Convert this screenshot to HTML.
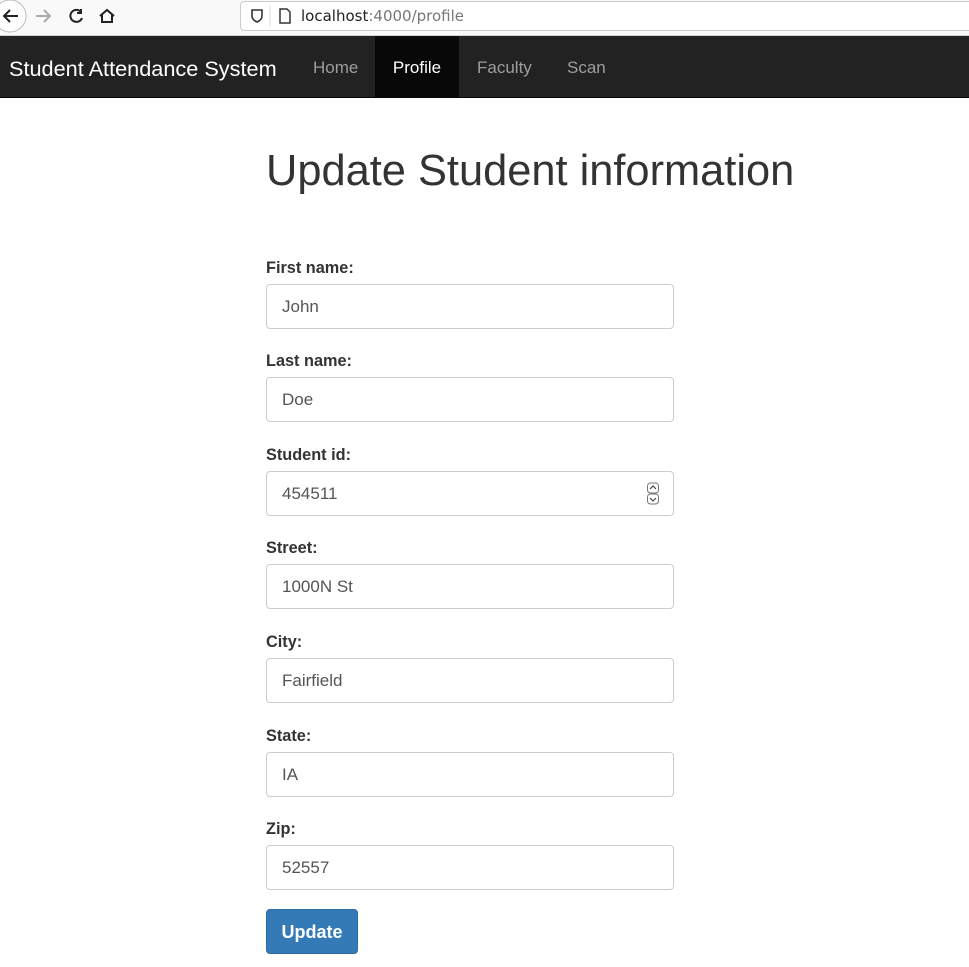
<!DOCTYPE html>
<html><head><style>
body{margin:0;width:969px;height:967px;overflow:hidden;background:#fff;font-family:"Liberation Sans",sans-serif;color:#333}
.chrome{position:absolute;left:0;top:0;width:969px;height:35px;background:#f9f9fa;border-bottom:1px solid #d0d0d0}
.url{position:absolute;left:240px;top:1px;width:740px;height:28px;border:1px solid #ccc;border-radius:4px;background:#fff}
.url span{position:absolute;left:60px;top:5px;font-size:15px;font-family:"DejaVu Sans",sans-serif;color:#222}
.nav{position:absolute;left:0;top:36px;width:969px;height:61px;background:#222;border-bottom:1px solid #080808}
.brand{position:absolute;left:9px;top:20px;font-size:21.7px;color:#fff}
.ni{position:absolute;top:1px;height:61px;line-height:61px;font-size:17px;color:#9d9d9d}
h1{position:absolute;left:266px;top:147px;margin:0;font-weight:normal;font-size:43.4px;color:#333}
label{position:absolute;left:266px;font-weight:bold;font-size:16.3px;color:#333}
.in{position:absolute;left:266px;width:406px;height:43px;border:1px solid #ccc;border-radius:4px;font-size:17px;color:#555;line-height:44px;text-indent:15px}
.btn{position:absolute;left:266px;top:909px;width:90px;height:43px;background:#337ab7;border:1px solid #2e6da4;border-radius:4px;color:#fff;font-weight:bold;font-size:18px;line-height:45px;text-align:center}
</style></head><body>
<div class="chrome">
<svg width="240" height="35" style="position:absolute;left:0;top:0">
<circle cx="10" cy="16" r="16" fill="#fff" stroke="#bbb"/>
<path d="M18 16H4M10 10l-6 6 6 6" stroke="#222" stroke-width="2" fill="none"/>
<path d="M50 16H36M44 10l6 6-6 6" stroke="#aaa" stroke-width="2" fill="none"/>
<path d="M81 12a6 6 0 1 0 1 6M81 9v4h-4" stroke="#222" stroke-width="2" fill="none"/>
<path d="M100 16l7-6 7 6M102 14v8h10v-8" stroke="#222" stroke-width="2" fill="none"/>
</svg>
<div class="url"><svg width="60" height="28" style="position:absolute;left:0;top:0"><path d="M11 8h10v6c0 4-5 6-5 6s-5-2-5-6z" stroke="#333" stroke-width="1.6" fill="none"/><line x1="29" y1="4" x2="29" y2="24" stroke="#ddd"/><path d="M39 7h7l3 3v11h-10z" stroke="#333" stroke-width="1.5" fill="none"/></svg><span>localhost<span style="position:static;color:#777">:4000/profile</span></span></div>
</div>
<div class="nav"><div class="brand">Student Attendance System</div>
<div class="ni" style="left:313px">Home</div>
<div class="ni" style="left:375px;top:0;width:84px;background:#080808;color:#fff;text-align:center;line-height:63px">Profile</div>
<div class="ni" style="left:477px">Faculty</div>
<div class="ni" style="left:567px">Scan</div></div>
<h1>Update Student information</h1>
<label style="top:259px">First name:</label><div class="in" style="top:284px">John</div>
<label style="top:352px">Last name:</label><div class="in" style="top:377px">Doe</div>
<label style="top:446px">Student id:</label><div class="in" style="top:471px">454511
<svg width="12" height="24" style="position:absolute;left:380px;top:10px"><rect x="0.5" y="1" width="11" height="10" rx="3" fill="none" stroke="#777"/><rect x="0.5" y="12" width="11" height="10" rx="3" fill="none" stroke="#777"/><path d="M3 7l3-3 3 3M3 16l3 3 3-3" stroke="#333" fill="none"/></svg></div>
<label style="top:539px">Street:</label><div class="in" style="top:564px">1000N St</div>
<label style="top:633px">City:</label><div class="in" style="top:658px">Fairfield</div>
<label style="top:727px">State:</label><div class="in" style="top:752px">IA</div>
<label style="top:820px">Zip:</label><div class="in" style="top:845px">52557</div>
<div class="btn">Update</div>
</body></html>
